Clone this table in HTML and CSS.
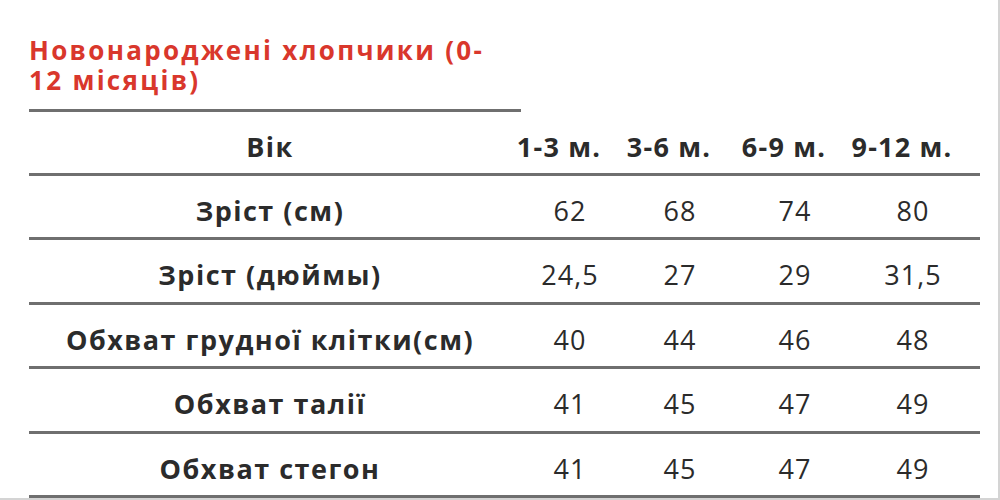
FILE: index.html
```html
<!DOCTYPE html>
<html lang="uk">
<head>
<meta charset="utf-8">
<title>Новонароджені хлопчики</title>
<link rel="stylesheet" href="styles.css">
</head>
<body>
<main class="page">
  <h1 class="title">Новонароджені хлопчики (0-<br>12 місяців)</h1>
  <div class="title-rule"></div>
  <section class="table">
    <div class="row head">
      <div class="label">Вік</div>
      <div class="cell">1-3 м.</div>
      <div class="cell">3-6 м.</div>
      <div class="cell">6-9 м.</div>
      <div class="cell">9-12 м.</div>
    </div>
    <div class="row">
      <div class="label">Зріст (см)</div>
      <div class="cell val">62</div>
      <div class="cell val">68</div>
      <div class="cell val">74</div>
      <div class="cell val">80</div>
    </div>
    <div class="row">
      <div class="label">Зріст (дюймы)</div>
      <div class="cell val">24,5</div>
      <div class="cell val">27</div>
      <div class="cell val">29</div>
      <div class="cell val">31,5</div>
    </div>
    <div class="row">
      <div class="label">Обхват грудної клітки(см)</div>
      <div class="cell val">40</div>
      <div class="cell val">44</div>
      <div class="cell val">46</div>
      <div class="cell val">48</div>
    </div>
    <div class="row">
      <div class="label">Обхват талії</div>
      <div class="cell val">41</div>
      <div class="cell val">45</div>
      <div class="cell val">47</div>
      <div class="cell val">49</div>
    </div>
    <div class="row">
      <div class="label">Обхват стегон</div>
      <div class="cell val">41</div>
      <div class="cell val">45</div>
      <div class="cell val">47</div>
      <div class="cell val">49</div>
    </div>
  </section>
</main>
</body>
</html>
```

FILE: styles.css
```css
html, body {
  margin: 0;
  padding: 0;
  background: #ffffff;
}

.page {
  box-sizing: border-box;
  width: 1000px;
  height: 500px;
  padding: 0 20px 0 29px;
  border-right: 2px solid #d4d4d4;
  border-bottom: 2px solid #d4d4d4;
  overflow: hidden;
  font-family: "Open Sans", "Liberation Sans", sans-serif;
  color: #2b2b2b;
}

.title {
  margin: 0;
  padding-top: 35px;
  font-size: 26px;
  font-weight: 700;
  letter-spacing: 2.3px;
  line-height: 30px;
  height: 60px;
  color: #d9372c;
  white-space: nowrap;
}

.title-rule {
  margin-top: 14px;
  width: 492px;
  height: 3px;
  background: #6f6f6f;
}

.table {
  width: 951px;
}

.row {
  display: grid;
  grid-template-columns: 475px 110px 110px 120px 116px 1fr;
  align-items: center;
  box-sizing: border-box;
  height: 64.5px;
  padding-top: 9px;
  border-bottom: 3px solid #6f6f6f;
  font-size: 27px;
  line-height: 1.2;
}

.row.head {
  height: 63.5px;
}

.label {
  font-weight: 700;
  letter-spacing: 1.5px;
  text-align: center;
  padding-left: 7px;
  white-space: nowrap;
}

.cell {
  text-align: center;
  font-weight: 700;
  letter-spacing: 1.2px;
  white-space: nowrap;
}

.cell.val {
  font-weight: 400;
  letter-spacing: 1px;
  padding-left: 22px;
}
```
